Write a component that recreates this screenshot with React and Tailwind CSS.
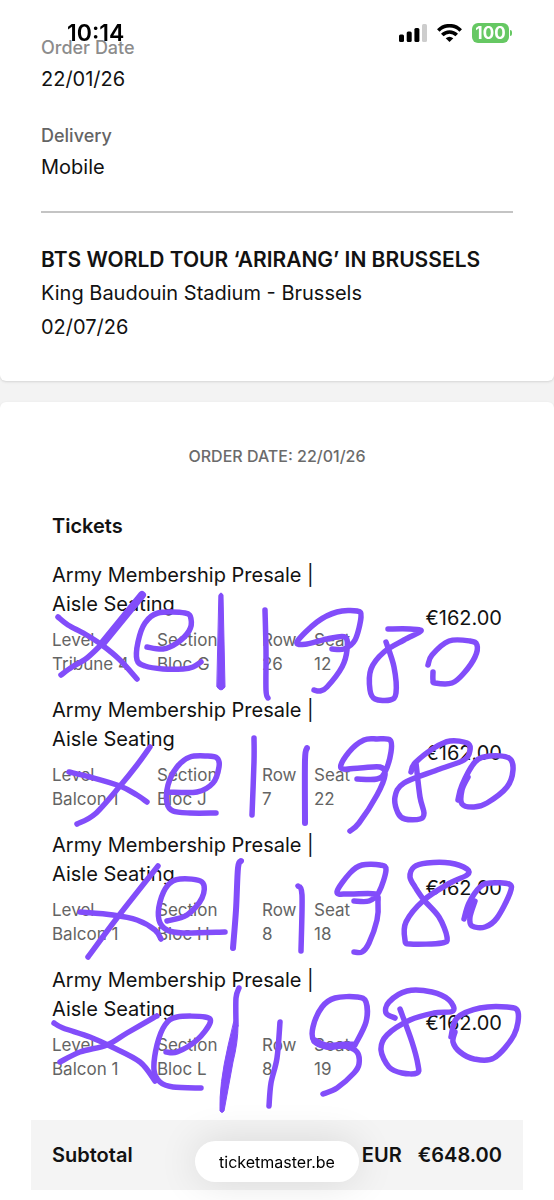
/**
 * Ticket Order Summary
 * Mobile order page with hand-drawn marks over the seats
 */
import React from 'react';

const tickets = [
  { level: 'Tribune 4', section: 'Bloc G', row: '26', seat: '12', price: '€162.00' },
  { level: 'Balcon 1', section: 'Bloc J', row: '7', seat: '22', price: '€162.00' },
  { level: 'Balcon 1', section: 'Bloc H', row: '8', seat: '18', price: '€162.00' },
  { level: 'Balcon 1', section: 'Bloc L', row: '8', seat: '19', price: '€162.00' }
];

// Pen strokes as x,y points, one entry per stroke
const strokes = [
  // first ticket
  { points: '58,617 68,625 85,634 102,645 120,660 137,679' },
  { points: '61,675 72,667 87,658 102,644' },
  { points: '102,644 142,595', width: 8 },
  { points: '147,647 163,649 177,643 189,631 191,619 185,613 158,613 145,623 138,642 137,660 145,666 163,669 183,669 193,667 201,662' },
  { points: '265,610 266,650 266,690 268,698' },
  { points: '332,649 344,649 355,640 361,617 357,611 337,612 317,622 297,642 307,644 327,639 345,637 347,650 342,667 327,687 320,691 314,690' },
  { points: '388,629 410,629 421,631 404,640 384,652 371,669 370,690 375,699 390,700 396,693 394,667 386,642' },
  { points: '428,665 432,655 449,641 470,641 477,645 475,657 464,673 452,683 435,683 433,680 433,672' },
  // second ticket
  { points: '69,772 90,777 120,786 137,795 147,802' },
  { points: '150,747 137,765 120,786 95,814 77,824' },
  { points: '168,792 197,792 213,783 219,767 217,758 207,756 190,757 177,767 168,785 167,803 173,811 190,813 216,813' },
  { points: '254,738 254,762 252,815' },
  { points: '307,748 305,760 305,823', width: 6 },
  { points: '357,779 377,779 385,772 391,752 390,740 377,739 364,740 349,752 341,768 360,768 380,767 385,775 377,795 359,823 350,831' },
  { points: '411,772 415,763 434,748 450,741 467,743 470,750 464,760 437,770 404,783 395,797 398,813 405,819 420,819 424,813 420,797 416,763' },
  { points: '468,777 462,790 462,804 474,807 487,803 507,787 513,770 509,758 490,756 475,762 462,785 458,800' },
  // third ticket
  { points: '80,912 113,915 137,920 155,930 161,939' },
  { points: '158,866 117,918 88,957' },
  { points: '167,921 187,915 202,898 202,882 180,879 168,885 160,902 159,920 167,930 183,933 225,932' },
  { points: '241,861 238,868 236,910 233,948', width: 6 },
  { points: '298,886 302,895 301,951' },
  { points: '354,901 369,901 379,892 386,870 380,865 362,865 350,873 337,892 349,894 375,894 378,903 377,920 369,943 362,952 354,952' },
  { points: '415,887 410,877 414,867 427,863 450,863 467,869 467,875 450,883 424,900 406,922 405,940 410,944 442,943 447,937 439,917 424,900 415,887' },
  { points: '464,919 469,903 480,887 490,883 509,884 510,893 497,918 485,927 472,926 470,917 475,901' },
  // fourth ticket
  { points: '54,1023 63,1028 90,1037 112,1047 140,1062 155,1081' },
  { points: '60,1062 80,1052 107,1045 127,1033 153,1018 157,1016' },
  { points: '166,1052 177,1052 197,1040 210,1023 205,1017 177,1017 165,1025 157,1045 154,1070 160,1082 173,1087 201,1088' },
  { points: '239,988 236,998 236,1025' },
  { points: '280,1022 277,1058 271,1083 269,1106' },
  { points: '315,1041 327,1046 344,1045 353,1045', width: 7 },
  { points: '355,1045 366,1022 366,1002 357,997 335,998 322,1007 313,1027 314,1041 327,1047 344,1046 357,1052 359,1064 354,1073 337,1088 323,1094' },
  { points: '395,1018 386,1013 389,1002 407,991 432,992 449,1000 453,1011 434,1013 410,1020 387,1035 381,1050 389,1067 402,1073 417,1073 418,1065 412,1042 400,1009' },
  { points: '455,1032 453,1042 460,1052 474,1059 494,1058 514,1035 518,1012 507,1007 480,1008 457,1018 451,1037' }
];

// Smooth curve through every point (Catmull-Rom to bezier)
const toPath = (text) => {
  const pts = text.split(' ').map((p) => p.split(',').map(Number));
  let d = `M${pts[0][0]} ${pts[0][1]}`;
  for (let i = 0; i < pts.length - 1; i++) {
    const p0 = pts[i - 1] || pts[i];
    const p1 = pts[i];
    const p2 = pts[i + 1];
    const p3 = pts[i + 2] || p2;
    d += `C${p1[0] + (p2[0] - p0[0]) / 6} ${p1[1] + (p2[1] - p0[1]) / 6} ${p2[0] - (p3[0] - p1[0]) / 6} ${p2[1] - (p3[1] - p1[1]) / 6} ${p2[0]} ${p2[1]}`;
  }
  return d;
};

function PenMarks() {
  return (
    <svg
      viewBox="0 0 554 1200"
      className="absolute top-0 left-0 z-10 w-full pointer-events-none"
      fill="none"
      stroke="#824dfa"
      strokeLinecap="round"
      strokeLinejoin="round"
      aria-hidden="true"
    >
      {strokes.map((stroke) => (
        <path key={stroke.points} d={toPath(stroke.points)} strokeWidth={stroke.width || 5.5} />
      ))}
      {/* Strokes that grow thicker towards the end */}
      <path d="M219 595Q221 591 223 595L225 687Q221 693 217 687Z" fill="#824dfa" />
      <path d="M234 1022L238 1025Q238 1042 233 1062L224 1111Q222 1114 220 1111Q219 1085 228 1046Z" fill="#824dfa" />
    </svg>
  );
}

function StatusBar() {
  return (
    <header className="fixed inset-x-0 top-0 z-20 flex items-center justify-between pt-[19px] pr-[42px] pl-[67px] text-black">
      <span className="text-[23px] leading-7 font-semibold">10:14</span>
      <div className="flex items-center gap-[10px]">
        <svg width="28" height="18" viewBox="0 0 28 18" aria-label="Signal">
          <rect x="0" y="10.500" width="5" height="7.500" rx="1.500" />
          <rect x="7.700" y="7.500" width="5" height="10.500" rx="1.500" />
          <rect x="15.400" y="4" width="5" height="14" rx="1.500" />
          <rect x="23" y="0" width="5" height="18" rx="1.500" fill="#cdcdcd" />
        </svg>
        <svg width="25" height="18" viewBox="0 0 25 18" fill="none" stroke="#000" strokeWidth="3.600" aria-label="Wi-Fi">
          <path d="M1.300 6.400C7.600 .1 17.400 .1 23.700 6.400" />
          <path d="M5.300 11C9.300 6.900 15.700 6.900 19.700 11" />
          <path d="M8.700 14.200Q12.500 11.200 16.300 14.200L12.500 18Z" fill="#000" stroke="none" />
        </svg>
        <div className="flex items-center gap-px">
          <span className="flex h-5 w-[37px] items-center justify-center rounded-md bg-[#66c863] text-[17px] leading-5 font-bold text-white">100</span>
          <span className="h-[6px] w-[2px] rounded-r-sm bg-[#66c863]" />
        </div>
      </div>
    </header>
  );
}

function Ticket({ ticket }) {
  return (
    <li className="flex items-center justify-between">
      <div className="w-[300px]">
        <h3 className="text-[20px] leading-[29px]">
          Army Membership Presale |<br />Aisle Seating
        </h3>
        <table className="mt-[9px] table-fixed text-left text-[17px] leading-6 text-[#646464]">
          <thead>
            <tr>
              <th className="w-[105px] p-0 font-normal">Level</th>
              <th className="w-[105px] p-0 font-normal">Section</th>
              <th className="w-[52px] p-0 font-normal">Row</th>
              <th className="p-0 font-normal">Seat</th>
            </tr>
          </thead>
          <tbody>
            <tr>
              <td className="p-0">{ticket.level}</td>
              <td className="p-0">{ticket.section}</td>
              <td className="p-0">{ticket.row}</td>
              <td className="p-0">{ticket.seat}</td>
            </tr>
          </tbody>
        </table>
      </div>
      <span className="text-[20px] leading-[29px]">{ticket.price}</span>
    </li>
  );
}

function App() {
  return (
    <div className="relative min-h-screen bg-[#f3f3f3] font-['Inter',sans-serif] text-[#121212]">
      <StatusBar />
      <PenMarks />

      <main className="flex flex-col gap-[21px]">
        <section className="rounded-b-md bg-white px-[41px] pt-9 pb-[37px] shadow-sm">
          <dl>
            <dt className="text-[18px] leading-6 font-medium text-[#8c8c8c]">Order Date</dt>
            <dd className="pt-[2px] text-[20px] leading-[34px]">22/01/26</dd>
            <dt className="mt-7 text-[18px] leading-6 font-medium text-[#646464]">Delivery</dt>
            <dd className="pt-[2px] text-[20px] leading-[34px]">Mobile</dd>
          </dl>
          <hr className="mt-[27px] mb-[31px] border-t-2 border-[#c4c4c4]" />
          <h1 className="text-[21px] leading-8 font-semibold whitespace-nowrap">
            BTS WORLD TOUR ‘ARIRANG’ IN BRUSSELS
          </h1>
          <p className="text-[20px] leading-[34px]">King Baudouin Stadium - Brussels</p>
          <p className="text-[20px] leading-[34px]">02/07/26</p>
        </section>

        <section className="rounded-t-md bg-white px-[31px] pt-[42px] pb-[10px] shadow-sm">
          <p className="text-center text-[16px] leading-6 font-medium text-[#6b6b6b]">ORDER DATE: 22/01/26</p>
          <div className="px-[21px] pt-[43px]">
            <h2 className="text-[20px] leading-[30px] font-semibold">Tickets</h2>
            <ul className="mt-5 flex flex-col gap-5">
              {tickets.map((ticket) => (
                <Ticket key={ticket.section} ticket={ticket} />
              ))}
            </ul>
          </div>
          <div className="mt-[39px] flex h-[70px] items-center justify-between bg-[#f4f4f4] px-[21px] text-[20px] font-semibold">
            <span>Subtotal</span>
            <span className="flex gap-4">
              <span>EUR</span>
              <span>€648.00</span>
            </span>
          </div>
        </section>
      </main>

      {/* Browser address pill */}
      <div className="fixed inset-x-0 bottom-[18px] z-20 flex justify-center">
        <button type="button" className="h-[41px] w-[164px] rounded-full bg-white text-[16px] text-black shadow-[0_0_40px_rgba(0,0,0,0.12)]">
          ticketmaster.be
        </button>
      </div>
    </div>
  );
}

export default App;
